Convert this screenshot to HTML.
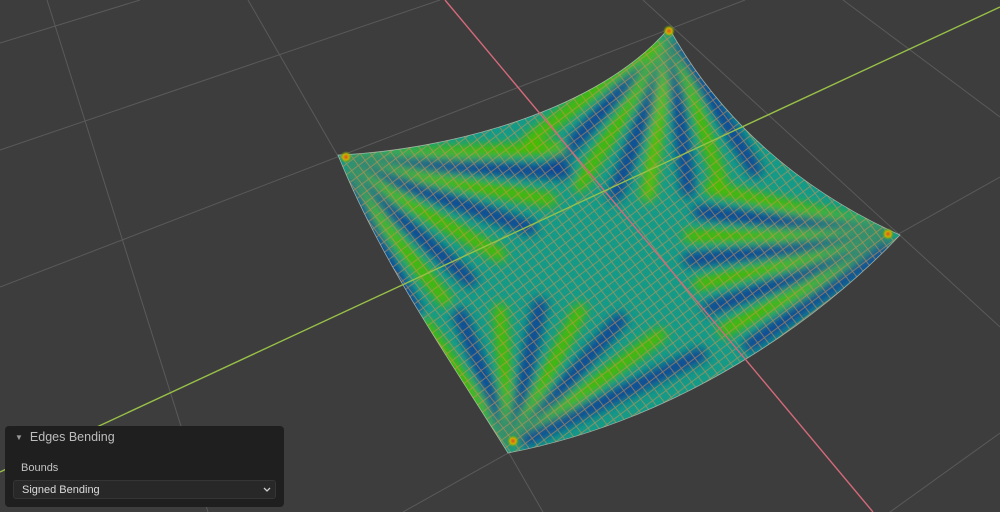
<!DOCTYPE html>
<html><head><meta charset="utf-8"><style>
html,body{margin:0;padding:0;background:#3d3d3d;width:1000px;height:512px;overflow:hidden;font-family:"Liberation Sans",sans-serif}
svg{position:absolute;left:0;top:0}
.panel{position:absolute;left:5px;top:426px;width:279px;height:81px;background:#1f1f1f;border-radius:4px;color:#c4c4c4;font-size:12px}
.hdr{position:absolute;left:10px;top:4px;font-size:12.5px;color:#bdbdbd}
.hdr span{font-size:8px;margin-right:7px;position:relative;top:-1px;color:#9a9a9a}
.lbl{position:absolute;left:16px;top:36px;font-size:11px;color:#c4c4c4}
.dd{position:absolute;left:8px;top:54px;width:263px;height:19px;background:#282828;border:1px solid #353535;border-radius:3px;box-sizing:border-box}
.dd .t{position:absolute;left:8px;top:3px;font-size:11px;color:#dcdcdc}
.dd svg{left:auto;right:4px;top:6px}
</style></head><body>
<svg width="1000" height="512" viewBox="0 0 1000 512">
<defs>
<clipPath id="cl"><path d="M338 155 C450 150 600 110 669 28 C720 120 800 190 900 235 C820 320 680 420 508 453 C450 360 380 260 338 155Z"/></clipPath>
<pattern id="wf" width="12" height="12" patternUnits="userSpaceOnUse" patternTransform="rotate(8)">
<path d="M0 0L12 12M12 0L0 12" stroke="#d8904a" stroke-width="0.8" opacity="0.65"/>
</pattern>
<filter id="bl" x="-20%" y="-20%" width="140%" height="140%"><feGaussianBlur stdDeviation="5"/></filter>
<radialGradient id="hot"><stop offset="0" stop-color="#e05020"/><stop offset="0.5" stop-color="#c8b000"/><stop offset="1" stop-color="#50b000" stop-opacity="0"/></radialGradient>
</defs>
<g stroke="#5a5a5a" stroke-width="1" fill="none">
<line x1="47" y1="0" x2="208" y2="512"/>
<line x1="248" y1="0" x2="543" y2="512"/>
<line x1="643" y1="0" x2="1000" y2="327"/>
<line x1="843" y1="0" x2="1000" y2="117"/>
<line x1="0" y1="43" x2="140" y2="0"/>
<line x1="0" y1="150" x2="440" y2="0"/>
<line x1="0" y1="287" x2="745" y2="0"/>
<line x1="403" y1="512" x2="1000" y2="177"/>
<line x1="890" y1="512" x2="1000" y2="433"/>
</g>
<g clip-path="url(#cl)">
<rect width="1000" height="512" fill="#159a88"/>
<g filter="url(#bl)" stroke-linecap="round" fill="none" stroke-width="14">
<path d="M660 45 L550 170" stroke="#0c4496"/>
<path d="M665 45 L580 185" stroke="#4cbc00"/>
<path d="M669 45 L615 195" stroke="#0c4496"/>
<path d="M669 45 L648 195" stroke="#5cc000"/>
<path d="M672 45 L688 190" stroke="#0c4496"/>
<path d="M676 45 L720 180" stroke="#4cbc00"/>
<path d="M680 45 L755 170" stroke="#0c4496"/>
<path d="M655 45 L530 140" stroke="#4cbc00"/>
<path d="M355 158 L560 148" stroke="#4cbc00"/>
<path d="M355 162 L565 172" stroke="#0c4496"/>
<path d="M355 165 L550 200" stroke="#4cbc00"/>
<path d="M355 168 L530 228" stroke="#0c4496"/>
<path d="M353 172 L500 255" stroke="#4cbc00"/>
<path d="M351 176 L470 280" stroke="#0c4496"/>
<path d="M349 180 L445 300" stroke="#4cbc00"/>
<path d="M347 185 L415 310" stroke="#0c4496"/>
<path d="M885 230 L710 188" stroke="#4cbc00"/>
<path d="M885 233 L700 212" stroke="#0c4496"/>
<path d="M885 236 L690 236" stroke="#4cbc00"/>
<path d="M885 239 L690 260" stroke="#0c4496"/>
<path d="M885 242 L700 284" stroke="#4cbc00"/>
<path d="M885 245 L710 308" stroke="#0c4496"/>
<path d="M885 248 L725 330" stroke="#4cbc00"/>
<path d="M885 250 L750 345" stroke="#0c4496"/>
<path d="M505 440 L425 325" stroke="#4cbc00"/>
<path d="M508 440 L460 315" stroke="#0c4496"/>
<path d="M510 440 L500 310" stroke="#4cbc00"/>
<path d="M512 440 L540 305" stroke="#0c4496"/>
<path d="M515 440 L580 310" stroke="#4cbc00"/>
<path d="M518 440 L620 320" stroke="#0c4496"/>
<path d="M520 440 L660 335" stroke="#4cbc00"/>
<path d="M525 440 L700 355" stroke="#0c4496"/>
</g>
<rect width="1000" height="512" fill="url(#wf)"/>
</g>
<path d="M338 155 C450 150 600 110 669 28 C720 120 800 190 900 235 C820 320 680 420 508 453 C450 360 380 260 338 155Z" fill="none" stroke="#c8d0c0" stroke-width="0.8" opacity="0.7"/>
<circle cx="346" cy="157" r="6" fill="url(#hot)"/>
<circle cx="669" cy="31" r="6" fill="url(#hot)"/>
<circle cx="888" cy="234" r="6" fill="url(#hot)"/>
<circle cx="513" cy="441" r="6" fill="url(#hot)"/>
<line x1="445" y1="0" x2="873" y2="512" stroke="#d46a7a" stroke-width="1.4"/>
<line x1="0" y1="472" x2="1000" y2="7" stroke="#98c048" stroke-width="1.4"/>
</svg>
<div class="panel">
<div class="hdr"><span>▼</span>Edges Bending</div>
<div class="lbl">Bounds</div>
<div class="dd"><div class="t">Signed Bending</div>
<svg width="8" height="6" viewBox="0 0 8 6"><path d="M1 1L4 4L7 1" stroke="#ccc" stroke-width="1.3" fill="none"/></svg></div>
</div>
</body></html>
